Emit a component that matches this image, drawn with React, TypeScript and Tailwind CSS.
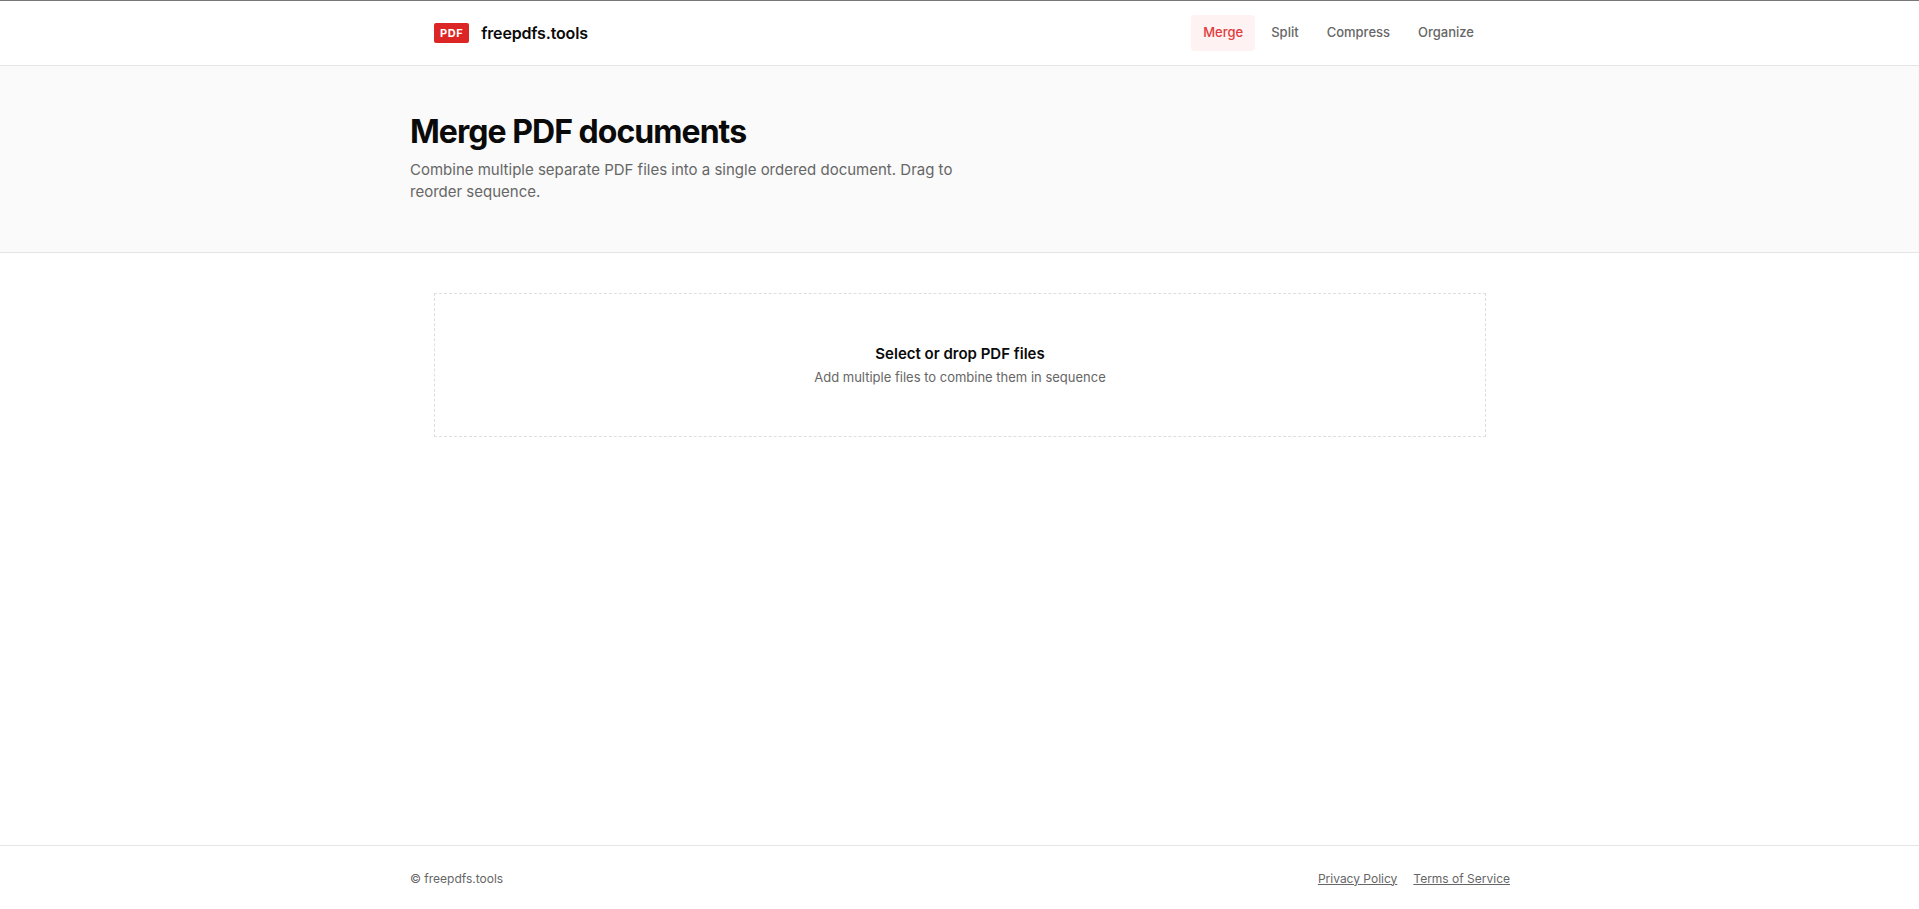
const navItems = [
  { label: "Merge", active: true },
  { label: "Split", active: false },
  { label: "Compress", active: false },
  { label: "Organize", active: false },
]

function Header() {
  return (
    <header className="h-[66px] bg-white border-t border-t-[#777777] border-b border-b-[#e5e5e5]">
      <div className="ml-[410px] flex h-full w-[1100px] items-center justify-between px-6">
        <div className="flex items-center gap-3">
          <span className="rounded-[2px] bg-[#dc2626] px-1.5 py-0.5 text-[11px] leading-[16px] font-bold tracking-[0.05em] text-white">PDF</span>
          <span className="text-base font-semibold tracking-[-0.01em] text-[#0a0a0a]">freepdfs.tools</span>
        </div>
        <nav className="flex items-center gap-1">
          {navItems.map(function (item) {
            return (
              <a
                key={item.label}
                href="#"
                className={
                  item.active
                    ? "rounded bg-[#fef2f2] px-3 pt-[7px] pb-[9px] text-[13px] font-medium leading-5 text-[#e23b3b]"
                    : "rounded px-3 pt-[7px] pb-[9px] text-[13px] font-medium leading-5 text-[#666666]"
                }
              >
                {item.label}
              </a>
            )
          })}
        </nav>
      </div>
    </header>
  )
}

export default function App() {
  return (
    <div className="flex min-h-[909px] flex-col bg-white font-['Inter',sans-serif]">
      <Header />
      <section className="h-[187px] border-b border-[#e5e5e5] bg-[#fafafa]">
        <div className="ml-[410px] w-[1100px] pt-[46px]">
          <h1 className="text-[32px] leading-[40px] font-bold tracking-[-0.03em] text-[#0a0a0a]">Merge PDF documents</h1>
          <p className="mt-[7px] max-w-[560px] text-[15px] leading-[22px] text-[#666666]">
            Combine multiple separate PDF files into a single ordered document. Drag to reorder sequence.
          </p>
        </div>
      </section>
      <main className="flex-1">
        <div className="ml-[410px] w-[1100px] px-6 pt-10">
          <div className="flex h-[144px] flex-col items-center justify-center border border-dashed border-[#dedede] text-center">
            <div className="text-[15px] leading-[22px] font-semibold text-[#0a0a0a]">Select or drop PDF files</div>
            <div className="mt-0.5 text-[13px] leading-5 text-[#666666]">Add multiple files to combine them in sequence</div>
          </div>
        </div>
      </main>
      <footer className="h-[64px] border-t border-[#e5e5e5]">
        <div className="ml-[410px] flex h-full w-[1100px] items-center justify-between pt-0.5 text-xs text-[#666666]">
          <span>© freepdfs.tools</span>
          <div className="flex gap-4">
            <a href="#" className="underline">Privacy Policy</a>
            <a href="#" className="underline">Terms of Service</a>
          </div>
        </div>
      </footer>
    </div>
  )
}
